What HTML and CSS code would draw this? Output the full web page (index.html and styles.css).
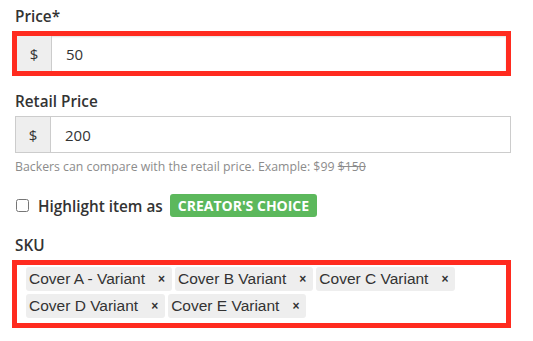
FILE: index.html
```html
<!DOCTYPE html>
<html lang="en">
<head>
  <meta charset="UTF-8" />
  <title>Reward Item</title>
  <link rel="stylesheet" href="styles.css">
</head>
<body>
  <form class="item-form">
    <div class="field">
      <label class="field-label">Price*</label>
      <div class="highlight">
        <div class="input-group">
          <span class="addon">$</span>
          <input class="form-control" type="text" value="50">
        </div>
      </div>
    </div>

    <div class="field">
      <label class="field-label">Retail Price</label>
      <div class="input-group bordered">
        <span class="addon">$</span>
        <input class="form-control" type="text" value="200">
      </div>
      <p class="help-text">Backers can compare with the retail price. Example: $99 <s>$150</s></p>
    </div>

    <div class="field check-row">
      <input type="checkbox" id="highlight-item">
      <label for="highlight-item" class="check-label">Highlight item as</label>
      <span class="badge">Creator's Choice</span>
    </div>

    <div class="field">
      <label class="field-label">SKU</label>
      <div class="highlight">
        <div class="tag-box">
          <span class="tag">Cover A - Variant <span class="remove">&times;</span></span>
          <span class="tag">Cover B Variant <span class="remove">&times;</span></span>
          <span class="tag">Cover C Variant <span class="remove">&times;</span></span>
          <span class="tag">Cover D Variant <span class="remove">&times;</span></span>
          <span class="tag">Cover E Variant <span class="remove">&times;</span></span>
        </div>
      </div>
    </div>
  </form>
</body>
</html>
```

FILE: styles.css
```css
body {
  font-family: 'Open Sans', sans-serif;
  color: #333;
  background-color: #ffffff;
  margin: 0;
  padding: 6px 22px 0 15px;
}

.field-label {
  display: block;
  font-size: 15.3px;
  font-weight: 600;
  line-height: 21px;
  margin-bottom: 4px;
}

.highlight {
  margin-left: -3px;
  border: 5px solid #ff2b1f;
}

.input-group {
  display: flex;
  height: 35px;
  background-color: #ffffff;
  box-shadow: inset 0 1px 2px rgba(0, 0, 0, 0.12);
}

.input-group.bordered {
  height: 37px;
  box-sizing: border-box;
  border: 1px solid #cccccc;
  box-shadow: none;
}

.addon {
  width: 34px;
  flex: none;
  display: flex;
  align-items: center;
  justify-content: center;
  background-color: #eeeeee;
  border-right: 1px solid #cccccc;
  font-size: 15px;
  color: #333;
}

.form-control {
  flex: 1;
  border: none;
  background: transparent;
  padding: 0 14px;
  font-family: 'Open Sans', sans-serif;
  font-size: 15px;
  color: #333;
  outline: none;
}

.field + .field {
  margin-top: 15px;
}

.help-text {
  margin: 5px 0 0;
  font-size: 12.3px;
  color: #8c8c8c;
}

.check-row {
  display: flex;
  align-items: center;
}

.field.check-row {
  margin-top: 19px;
}

.check-row input {
  width: 13px;
  height: 13px;
  margin: 0 9px 0 1px;
}

.check-label {
  font-size: 15.3px;
  font-weight: 600;
  margin-right: 7px;
}

.badge {
  display: inline-block;
  background-color: #5cb85c;
  color: #ffffff;
  font-size: 14px;
  font-weight: 700;
  text-transform: uppercase;
  line-height: 23px;
  padding: 0 8px;
  border-radius: 3px;
}

.field.check-row + .field {
  margin-top: 18px;
}

.tag-box {
  display: flex;
  flex-wrap: wrap;
  gap: 3px;
  padding: 2px 9px 5px 9px;
}

.tag {
  display: inline-flex;
  align-items: center;
  height: 24px;
  padding: 0 7px 0 3px;
  background-color: #eeeeee;
  border-radius: 3px;
  font-family: 'Liberation Sans', Arial, sans-serif;
  font-size: 15.5px;
  color: #333;
}

.remove {
  margin-left: 13px;
  font-size: 12px;
  font-weight: 700;
}
```
